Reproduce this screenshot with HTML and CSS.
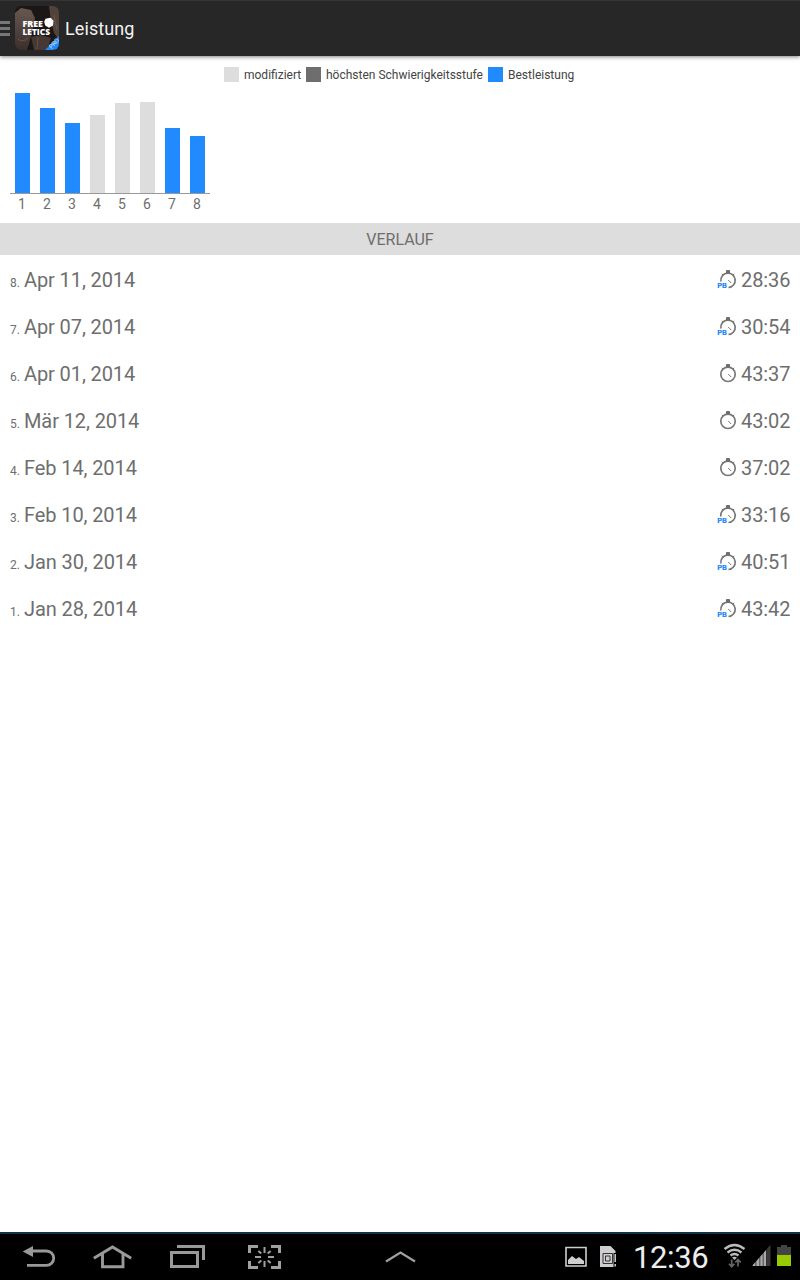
FILE: index.html
```
<!DOCTYPE html>
<html lang="de">
<head>
<meta charset="UTF-8" />
<meta name="viewport" content="width=device-width, initial-scale=1.0"/>
<title>Leistung</title>
<link rel="stylesheet" href="styles.css">
</head>
<body>

<!-- Shared stopwatch icons -->
<svg class="defs" width="0" height="0">
  <symbol id="watch" viewBox="0 0 20 20">
    <circle cx="11" cy="11.3" r="7.2" fill="none" stroke="#777" stroke-width="1.7"/>
    <path d="M9.500 1.500h3v2.500h-3zM4.800 4.800l1.200 1.200M17.200 4.800L16 6" fill="#6e6e6e" stroke="#6e6e6e"/>
    <path d="M11.200 11l3 3" stroke="#777"/>
  </symbol>
  <symbol id="watch-pb" viewBox="0 0 20 20">
    <path d="M3.900 12.500A7.200 7.200 0 1 1 11.500 18.500" fill="none" stroke="#777" stroke-width="1.7"/>
    <path d="M9.500 1.500h3v2.500h-3zM4.800 4.800l1.200 1.200M17.200 4.800L16 6" fill="#6e6e6e" stroke="#6e6e6e"/>
    <path d="M11.200 11l3 3" stroke="#777"/>
  </symbol>
</svg>

<header>
  <div class="menu"><i></i><i></i><i></i></div>
  <svg class="logo" width="44" height="44" viewBox="0 0 44 44">
    <defs>
      <clipPath id="round"><rect width="44" height="44" rx="6"/></clipPath>
      <linearGradient id="skin" x1="0" y1="0" x2="0" y2="1">
        <stop offset="0" stop-color="#675851"/>
        <stop offset="1" stop-color="#3b2f2b"/>
      </linearGradient>
    </defs>
    <g clip-path="url(#round)">
      <rect width="44" height="44" fill="#1a1716"/>
      <path d="M0 7l6-5 10 2 4 8-3 15-4 17H0z" fill="url(#skin)"/>
      <path d="M34 0h10v34l-5-7-3-12z" fill="#51423b"/>
      <path d="M16 31l10-2 10 3-4 12H17z" fill="#463832"/>
      <path d="M3 33q5 4 10-1M5 6q4 5 11 4M23 32l-1 11M39 9l3 15" fill="none" stroke="#6d5b52" stroke-width="0.8"/>
      <path d="M12 44l4-13 3 13z" fill="#1a1716"/>
      <text class="logo-text" x="7.500" y="20.700" textLength="20.500" lengthAdjust="spacingAndGlyphs">FREE</text>
      <text class="logo-text" x="7.500" y="29.200" textLength="27.500" lengthAdjust="spacingAndGlyphs">LETICS</text>
      <path d="M30.500 12.700l5-1 3 3-.5 4.800-4 2.200-3.800-2.200-1-3.800z" fill="#fff"/>
      <path d="M30 44L44 30v14z" fill="#2489f5"/>
      <text class="pro" transform="translate(36.500 43) rotate(-47)">PRO</text>
    </g>
  </svg>
  <h1>Leistung</h1>
</header>

<div class="legend">
  <span class="key light"></span><span class="name modified">modifiziert</span>
  <span class="key dark"></span><span class="name hardest">höchsten Schwierigkeitsstufe</span>
  <span class="key blue"></span><span class="name best">Bestleistung</span>
</div>

<div class="chart">
  <div class="bars">
    <div class="bar blue" style="height:100px"></div>
    <div class="bar blue" style="height:85px"></div>
    <div class="bar blue" style="height:70px"></div>
    <div class="bar light" style="height:78px"></div>
    <div class="bar light" style="height:90px"></div>
    <div class="bar light" style="height:91px"></div>
    <div class="bar blue" style="height:65px"></div>
    <div class="bar blue" style="height:57px"></div>
  </div>
  <div class="labels">
    <span>1</span><span>2</span><span>3</span><span>4</span><span>5</span><span>6</span><span>7</span><span>8</span>
  </div>
</div>

<h2>VERLAUF</h2>

<div class="history">
  <div class="row"><span class="no">8.</span><span class="date">Apr 11, 2014</span><div class="icon"><svg><use href="#watch-pb"/></svg><span class="pb">PB</span></div><span class="time">28:36</span></div>
  <div class="row"><span class="no">7.</span><span class="date">Apr 07, 2014</span><div class="icon"><svg><use href="#watch-pb"/></svg><span class="pb">PB</span></div><span class="time">30:54</span></div>
  <div class="row"><span class="no">6.</span><span class="date">Apr 01, 2014</span><div class="icon"><svg><use href="#watch"/></svg></div><span class="time">43:37</span></div>
  <div class="row"><span class="no">5.</span><span class="date">Mär 12, 2014</span><div class="icon"><svg><use href="#watch"/></svg></div><span class="time">43:02</span></div>
  <div class="row"><span class="no">4.</span><span class="date">Feb 14, 2014</span><div class="icon"><svg><use href="#watch"/></svg></div><span class="time">37:02</span></div>
  <div class="row"><span class="no">3.</span><span class="date">Feb 10, 2014</span><div class="icon"><svg><use href="#watch-pb"/></svg><span class="pb">PB</span></div><span class="time">33:16</span></div>
  <div class="row"><span class="no">2.</span><span class="date">Jan 30, 2014</span><div class="icon"><svg><use href="#watch-pb"/></svg><span class="pb">PB</span></div><span class="time">40:51</span></div>
  <div class="row"><span class="no">1.</span><span class="date">Jan 28, 2014</span><div class="icon"><svg><use href="#watch-pb"/></svg><span class="pb">PB</span></div><span class="time">43:42</span></div>
</div>

<footer>
  <div class="buttons">
    <!-- Back -->
    <svg width="34" height="32" viewBox="0 0 34 32">
      <path d="M0.700 10.500L11 5v11z" fill="#999"/>
      <path d="M10 10h14.500a7.200 7.200 0 0 1 0 14.400H5" fill="none" stroke="#999" stroke-width="2.800"/>
    </svg>
    <!-- Home -->
    <svg width="40" height="32" viewBox="0 0 40 32">
      <path d="M0.800 17.300L19.500 6l18.700 11.300M9.500 12.500v13.200h20.500V12.500" fill="none" stroke="#999" stroke-width="2.900"/>
    </svg>
    <!-- Recent apps -->
    <svg width="36" height="32" viewBox="0 0 36 32">
      <path d="M7 5.500h26.500V19" fill="none" stroke="#999" stroke-width="3"/>
      <path d="M1.500 11.500h26v14h-26z" fill="none" stroke="#999" stroke-width="3"/>
    </svg>
    <!-- Screen capture -->
    <svg class="capture" width="34" height="32" viewBox="0 0 34 32">
      <path d="M1.500 12V5.500H10M23 5.500h8.500V12M31.500 20v6.500H23M10 26.500H1.500V20" fill="none" stroke="#a0a0a0" stroke-width="3"/>
      <path d="M16.500 6v6M16.500 20v6M7 16h6M20 16h6M10.300 10l3 2.500M22.700 10l-3 2.500M10.300 22l3-2.500M22.700 22l-3-2.500" stroke="#a0a0a0" stroke-width="2"/>
    </svg>
  </div>
  <svg class="up" width="32" height="32" viewBox="0 0 32 32">
    <path d="M2 20.500l14.500-9L31 20.500" fill="none" stroke="#a0a0a0" stroke-width="2.200"/>
  </svg>
  <div class="status">
    <!-- Picture -->
    <svg width="22" height="32" viewBox="0 0 22 32">
      <path d="M1 6.500h20v18.500H1z" fill="none" stroke="#d0cdd0" stroke-width="1.600"/>
      <path d="M3 23v-4l4-4 4 3 3-2 5 4v3z" fill="#d0cdd0"/>
    </svg>
    <!-- SIM card -->
    <svg class="sim" width="18" height="32" viewBox="0 0 18 32">
      <path d="M0 5h10.500l5 5v16H0z" fill="#d0cdd0"/>
      <path d="M3 12.500h9.500v10H3zM5.500 15h4.500v5H5.500z" fill="none" stroke="#333" stroke-width="1"/>
      <path d="M13.500 12h4.500v14h-4.500z" fill="#000"/>
      <path d="M15.200 13v8M15.200 23v2.500" stroke="#d0cdd0" stroke-width="1.500"/>
    </svg>
    <span class="clock">12:36</span>
    <!-- Wifi -->
    <svg class="wifi" width="24" height="32" viewBox="0 0 24 32">
      <path d="M1.500 8q10-8 20 0M4.500 11.500q7-5.500 14 0M7.500 14.500q4-3 8 0" fill="none" stroke="#bbb" stroke-width="2.400"/>
      <path d="M9 16.500q2.500-1.500 5 0L11.500 19z" fill="#bbb"/>
      <path d="M8.700 18.500v7M6 22.700l2.700 3 2.700-3M15 25.500v-7M12.300 21.500l2.700-3 2.700 3" fill="none" stroke="#666" stroke-width="1.700"/>
    </svg>
    <!-- Signal -->
    <svg class="signal" width="20" height="32" viewBox="0 0 20 32">
      <path d="M0 25L14.500 8.500V25z" fill="#666"/>
      <path d="M1 25v-1.200l2-2V25zM4.500 25v-5L7 17.200V25zM8.500 25v-9.500l2-2.200V25zM12 25V11.500l2-2.300V25z" fill="#aaa"/>
      <path d="M15 25V7.500L18.500 4v21z" fill="#3a3a3a"/>
    </svg>
    <!-- Battery -->
    <svg class="battery" width="14" height="32" viewBox="0 0 14 32">
      <path d="M4 4h6v2h4v8H0V6h4z" fill="#444"/>
      <path d="M0 14h14v11H0z" fill="#99cc00"/>
    </svg>
  </div>
</footer>

</body>
</html>
```
FILE: styles.css
```
* {
  box-sizing: border-box;
}
body {
  display: flex;
  flex-direction: column;
  height: 1280px;
  margin: 0;
  background: #fff;
  color: #6e6e6e;
  font-family: Roboto, sans-serif;
  overflow: hidden;
}
svg {
  display: block;
  flex: none;
}
.defs {
  position: absolute;
}
header {
  display: flex;
  align-items: center;
  height: 56px;
  padding-bottom: 1px;
  background: #272727;
  border-top: 1px solid #353535;
  box-shadow: 0 1px 4px rgba(0,0,0,0.5);
}
.menu {
  display: flex;
  flex-direction: column;
  gap: 3px;
  width: 10px;
  margin: 1px 5px 0 0;
}
.menu i {
  height: 3px;
  background: #77777b;
}
h1 {
  margin: 1px 0 0 6px;
  color: #f3f3f3;
  font-size: 18px;
  font-weight: 400;
  letter-spacing: 0.1px;
}
.logo-text {
  fill: #fff;
  font: 900 8.4px "Open Sans", sans-serif;
  font-weight: 800;
}
.pro {
  fill: #cfe5ff;
  font: 400 6px Roboto, sans-serif;
}

/* chart */
.light {
  background: #ddd;
}
.dark {
  background: #6e6e6e;
}
.blue {
  background: #218aff;
}
.legend {
  display: flex;
  align-items: center;
  height: 15px;
  margin: 11px 0 0 224px;
  color: #444;
  font-size: 12px;
}
.key {
  width: 15px;
  height: 15px;
  margin-right: 5px;
}
.name {
  white-space: nowrap;
}
.modified {
  width: 62px;
}
.hardest {
  width: 162px;
}
.chart {
  width: 200px;
  margin: 11px 0 0 10px;
}
.bars {
  display: flex;
  align-items: flex-end;
  gap: 10px;
  height: 101px;
  padding-left: 5px;
  border-bottom: 1px solid #999;
}
.bar {
  width: 15px;
}
.labels {
  display: flex;
  height: 29px;
  font-size: 14px;
  line-height: 21px;
}
.labels span {
  width: 25px;
  padding-right: 1px;
  text-align: center;
}

h2 {
  height: 32px;
  margin: 0;
  background: #ddd;
  font-size: 16px;
  font-weight: 400;
  line-height: 33px;
  text-align: center;
}
.history {
  flex: 1;
  padding: 1px 10px 0;
}
.row {
  display: flex;
  align-items: center;
  height: 47px;
  font-size: 20px;
}
.no {
  width: 14px;
  padding-top: 7px;
  font-size: 12px;
}
.date {
  flex: 1;
  letter-spacing: -0.1px;
}
.icon {
  position: relative;
  width: 20px;
  height: 20px;
  margin: 0 4px 1px 0;
}
.icon svg {
  width: 20px;
  height: 20px;
}
.pb {
  position: absolute;
  left: 0;
  bottom: -1px;
  color: #2489fb;
  font: 700 7px/8px "DejaVu Sans", sans-serif;
  letter-spacing: -0.3px;
}
.time {
  width: 49px;
  letter-spacing: -0.1px;
}

/* system bar */
footer {
  display: flex;
  align-items: center;
  height: 48px;
  padding: 0 9px 0 22px;
  background: #000;
  border-top: 2px solid #0d3345;
}
.buttons {
  display: flex;
  gap: 37px;
}
.capture {
  margin-left: 5px;
}
.up {
  margin-left: 102px;
}
.status {
  display: flex;
  align-items: center;
  margin-left: auto;
}
.sim {
  margin-left: 13px;
}
.clock {
  width: 75px;
  margin: 1px 0 0 15px;
  color: #eee;
  font-size: 31px;
  letter-spacing: -0.4px;
}
.wifi {
  margin-left: 15px;
}
.signal {
  margin-left: 5px;
}
.battery {
  margin-left: 5px;
}
```
